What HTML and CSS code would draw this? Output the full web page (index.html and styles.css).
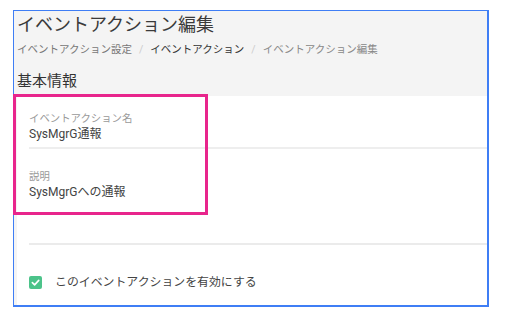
FILE: index.html
```html
<!DOCTYPE html>
<html lang="ja">
<head>
    <meta charset="UTF-8">
    <meta name="viewport" content="width=device-width, initial-scale=1.0">
    <title>イベントアクション編集</title>
    <link rel="stylesheet" href="styles.css">
</head>
<body>
    <div class="frame">
        <div class="page-head">
            <h1>イベントアクション編集</h1>
            <div class="breadcrumb">
                <span class="crumb">イベントアクション設定</span>
                <span class="sep">/</span>
                <span class="crumb current-parent">イベントアクション</span>
                <span class="sep">/</span>
                <span class="crumb last">イベントアクション編集</span>
            </div>
            <h2>基本情報</h2>
        </div>

        <div class="card">
            <div class="field">
                <div class="field-label">イベントアクション名</div>
                <div class="field-value">SysMgrG通報</div>
            </div>
            <div class="divider"></div>
            <div class="field second">
                <div class="field-label">説明</div>
                <div class="field-value">SysMgrGへの通報</div>
            </div>
            <div class="divider lower"></div>
            <label class="check-row">
                <span class="checkbox">
                    <svg width="9" height="9" viewBox="0 0 10 10">
                        <path d="M1.5 5.2 L4 7.6 L8.6 2.6" fill="none" stroke="#fff" stroke-width="1.8" stroke-linecap="round" stroke-linejoin="round"/>
                    </svg>
                </span>
                <span>このイベントアクションを有効にする</span>
            </label>
        </div>
    </div>

    <div class="highlight"></div>
</body>
</html>
```

FILE: styles.css
```css
body {
    margin: 0;
    padding: 0;
    background-color: #fff;
    font-family: Roboto, "Noto Sans CJK JP", sans-serif;
    color: #333;
    position: relative;
    width: 505px;
    height: 318px;
    overflow: hidden;
}
.frame {
    box-sizing: border-box;
    margin: 10px 0 0 13px;
    width: 476px;
    height: 297px;
    border: solid #3f7ef5;
    border-width: 1px 2px 2px 1px;
    background-color: #f4f4f4;
    display: flex;
    flex-direction: column;
}
.page-head {
    padding: 2px 0 0 3px;
}
h1 {
    margin: 0;
    font-size: 18px;
    line-height: 24px;
    font-weight: normal;
    color: #3a3a3a;
}
.breadcrumb {
    margin-top: 5px;
    font-size: 10.5px;
    line-height: 16px;
    color: #777;
    display: flex;
    gap: 7px;
}
.breadcrumb .current-parent {
    color: #333;
}
.breadcrumb .last {
    color: #888;
}
.breadcrumb .sep {
    color: #ccc;
}
h2 {
    margin: 13px 0 5px;
    font-size: 15px;
    line-height: 20px;
    font-weight: normal;
    color: #333;
}
.card {
    flex-grow: 1;
    margin-left: 3px;
    background-color: #fff;
    padding: 16px 0 0 12px;
}
.field-label {
    font-size: 10.4px;
    line-height: 14px;
    color: #999;
}
.field-value {
    font-size: 12px;
    line-height: 16px;
    color: #444;
}
.divider {
    margin-top: 5px;
    height: 2px;
    background-color: #eee;
}
.field.second {
    margin-top: 21px;
}
.divider.lower {
    margin-top: 43px;
    background-color: #ebebeb;
}
.check-row {
    margin-top: 29px;
    display: flex;
    align-items: center;
    gap: 13px;
    font-size: 11.9px;
    line-height: 16px;
    color: #444;
}
.checkbox {
    width: 13px;
    height: 13px;
    border-radius: 2px;
    background-color: #4cc38a;
    display: flex;
    align-items: center;
    justify-content: center;
}
.highlight {
    position: absolute;
    left: 13px;
    top: 94px;
    width: 195px;
    height: 121px;
    box-sizing: border-box;
    border: 3px solid #e8258c;
}
```
